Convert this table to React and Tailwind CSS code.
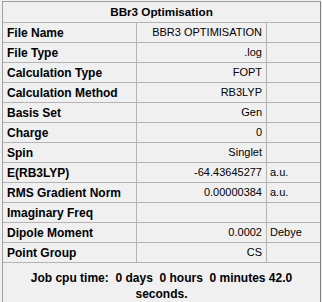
import React from "react";

const rows = [
  { label: "File Name", value: "BBR3 OPTIMISATION", unit: "" },
  { label: "File Type", value: ".log", unit: "" },
  { label: "Calculation Type", value: "FOPT", unit: "" },
  { label: "Calculation Method", value: "RB3LYP", unit: "" },
  { label: "Basis Set", value: "Gen", unit: "" },
  { label: "Charge", value: "0", unit: "" },
  { label: "Spin", value: "Singlet", unit: "" },
  { label: "E(RB3LYP)", value: "-64.43645277", unit: "a.u." },
  { label: "RMS Gradient Norm", value: "0.00000384", unit: "a.u." },
  { label: "Imaginary Freq", value: "", unit: "" },
  { label: "Dipole Moment", value: "0.0002", unit: "Debye" },
  { label: "Point Group", value: "CS", unit: "" },
];

export default function App() {
  return (
    <div
      className="w-[322px] h-[302px] overflow-hidden bg-[#f0f0f0] text-[11px] text-black"
      style={{ fontFamily: '"Liberation Sans", Arial, sans-serif' }}
    >
      <div className="ml-[2px] mr-[1px] mt-[1px] h-[301px] border-l border-t border-r border-l-[#a0a0a0] border-t-[#a0a0a0] border-r-[#808080]">
        {/* title */}
        <div className="h-[21px] flex items-center justify-center font-bold text-[11.7px] border-b border-[#b4b4b4]">
          BBr3 Optimisation
        </div>

        {/* property grid */}
        {rows.map((r) => (
          <div
            key={r.label}
            className="grid grid-cols-[134px_130px_1fr] h-[20px] border-b border-[#b4b4b4]"
          >
            <div className="flex items-center pl-[4px] font-bold text-[12px] border-r border-[#b4b4b4] whitespace-nowrap">
              {r.label}
            </div>
            <div className="flex items-center justify-end pr-[4px] border-r border-[#b4b4b4] whitespace-nowrap">
              {r.value}
            </div>
            <div className="flex items-center pl-[3px] whitespace-nowrap">{r.unit}</div>
          </div>
        ))}

        {/* cpu time */}
        <div className="pt-[7px] px-[14px] text-center font-bold text-[12px] leading-[16px]">
          Job cpu time:&nbsp; 0 days&nbsp; 0 hours&nbsp; 0 minutes 42.0 seconds.
        </div>
      </div>
    </div>
  );
}
